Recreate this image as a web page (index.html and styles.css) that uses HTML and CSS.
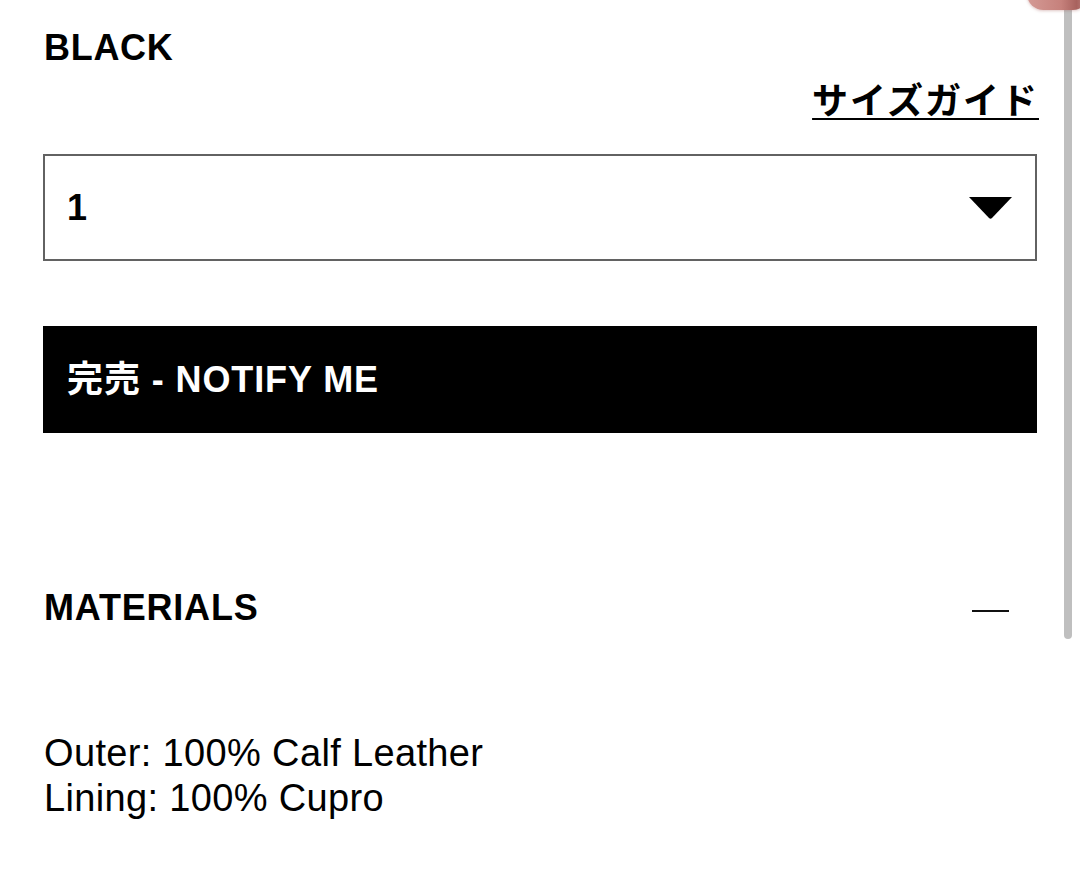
FILE: index.html
```html
<!DOCTYPE html>
<html lang="ja">
<head>
<meta charset="utf-8">
<title>Product options</title>
<link rel="stylesheet" href="styles.css">
</head>
<body>
<main class="panel">
  <div class="color-name">BLACK</div>
  <div class="guide-row"><a class="size-guide" href="#">サイズガイド</a></div>
  <div class="select-box">
    <span class="select-value">1</span>
    <svg class="caret" width="43" height="22" viewBox="0 0 43 22" aria-hidden="true"><path d="M0 0 H43 L23 21 Q21.5 22.5 20 21 Z" fill="#000"/></svg>
  </div>
  <button class="notify-btn" type="button">完売 - NOTIFY ME</button>
  <div class="acc-head">
    <span class="acc-title">MATERIALS</span>
    <span class="acc-minus"></span>
  </div>
  <div class="acc-body">
    <div>Outer: 100% Calf Leather</div>
    <div>Lining: 100% Cupro</div>
  </div>
</main>
<div class="scrollbar"></div>
<div class="corner-blob"></div>
</body>
</html>
```
FILE: styles.css
```css
html, body {
  margin: 0;
  padding: 0;
  background: #fff;
}
body {
  font-family: "Liberation Sans", "Noto Sans CJK JP", Arial, sans-serif;
  color: #000;
  width: 1080px;
  height: 869px;
  overflow: hidden;
}
.panel {
  padding: 28px 43px 0 43px;
  display: flex;
  flex-direction: column;
}
.color-name {
  font-size: 36px;
  font-weight: 700;
  line-height: 40px;
  letter-spacing: 0.7px;
  padding-left: 1px;
}
.guide-row {
  margin-top: 14px;
  display: flex;
  justify-content: flex-end;
}
.size-guide {
  font-size: 36px;
  font-weight: 700;
  line-height: 40px;
  color: #000;
  text-decoration: underline;
  text-decoration-thickness: 2px;
  text-underline-offset: 4px;
  letter-spacing: 2px;
  margin-right: -2px;
}
.select-box {
  margin-top: 32px;
  height: 107px;
  box-sizing: border-box;
  border: 2px solid #626262;
  display: flex;
  align-items: center;
  justify-content: space-between;
  padding: 0 23px 0 22px;
}
.select-value {
  font-size: 36px;
  font-weight: 700;
  line-height: 40px;
}
.caret {
  display: block;
  margin-top: 1px;
}
.notify-btn {
  margin-top: 65px;
  height: 107px;
  border: 0;
  background: #000;
  color: #fff;
  font-family: "Liberation Sans", "Noto Sans CJK JP", Arial, sans-serif;
  font-size: 36px;
  font-weight: 700;
  letter-spacing: 0.9px;
  line-height: 40px;
  text-align: left;
  padding: 0 0 0 24px;
}
.acc-head {
  margin-top: 155px;
  display: flex;
  align-items: center;
  justify-content: space-between;
}
.acc-title {
  font-size: 36px;
  font-weight: 700;
  line-height: 40px;
  letter-spacing: 0.8px;
  padding-left: 1px;
}
.acc-minus {
  width: 37px;
  height: 2px;
  background: #111;
  margin: 5px 28px 0 0;
}
.acc-body {
  margin-top: 103px;
  font-size: 38px;
  line-height: 45px;
  letter-spacing: 0.35px;
  padding-left: 1px;
}
.scrollbar {
  position: fixed;
  top: 0;
  left: 1064px;
  width: 8px;
  height: 639px;
  background: #bfbfbf;
  border-radius: 0 0 4px 4px;
}
.corner-blob {
  position: fixed;
  top: -22px;
  left: 1027px;
  width: 62px;
  height: 32px;
  border-radius: 16px;
  background: linear-gradient(90deg, #d49a95 0%, #c6817c 55%, #a8625e 80%, #c7908c 100%);
  box-shadow: 0 1px 3px rgba(160, 90, 85, 0.35);
}
```
